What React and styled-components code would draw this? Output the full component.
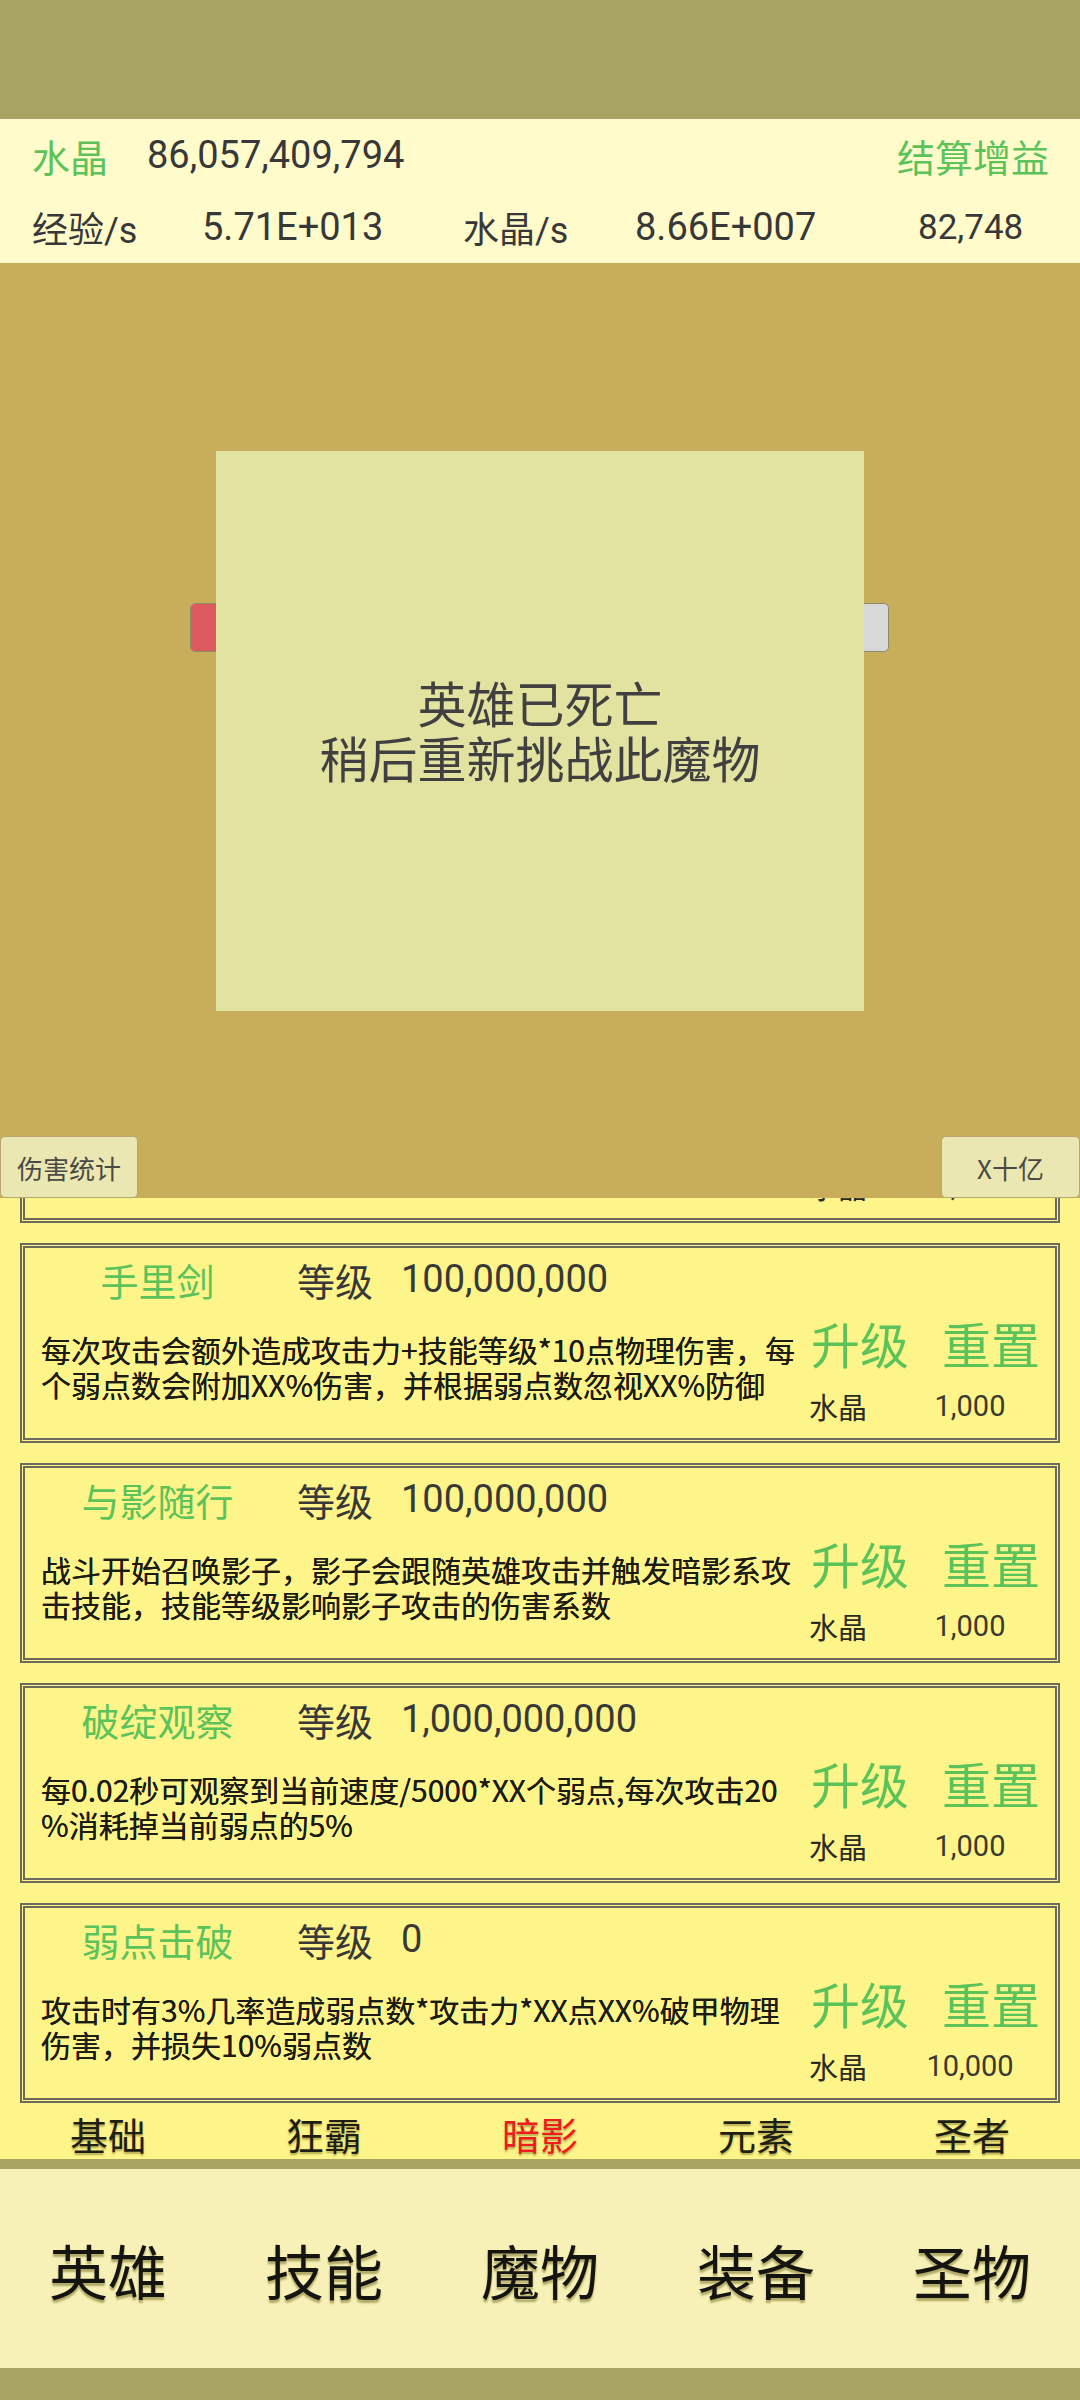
import React from 'react';
import styled, { createGlobalStyle } from 'styled-components';

const GlobalStyle = createGlobalStyle`
    html, body {
        margin: 0;
        padding: 0;
        background: #a8a463;
    }
    body {
        font-family: Roboto, "Noto Sans CJK SC", sans-serif;
    }
`;

const Screen = styled.div`
    width: 1080px;
    height: 2400px;
    display: flex;
    flex-direction: column;
    background: #a8a463;
    overflow: hidden;
`;

const TopBand = styled.div`
    height: 119px;
    flex: none;
    background: #a8a463;
`;

const Header = styled.div`
    height: 144px;
    flex: none;
    background: #fffbcb;
    display: flex;
    flex-direction: column;
`;

const HeaderRow = styled.div`
    height: 72px;
    display: grid;
    grid-template-columns: ${p => p.$cols};
    align-items: center;
    padding: 0 31px 0 32px;
    font-size: 38px;
    color: #383838;
`;

const Cell = styled.span`
    color: ${p => (p.$green ? '#5cc25a' : '#383838')};
    font-size: ${p => p.$size || 38}px;
    text-align: ${p => p.$align || 'left'};
    white-space: nowrap;
`;

const Battle = styled.div`
    position: relative;
    height: 935px;
    flex: none;
    background: #c8ad5a;
    display: flex;
    flex-direction: column;
`;

const HpBar = styled.div`
    margin: 340px 0 0 190px;
    width: 699px;
    height: 49px;
    box-sizing: border-box;
    border: 1px solid #8e8a70;
    border-radius: 5px;
    background: #d8d8d8;
    overflow: hidden;
`;

const HpFill = styled.div`
    height: 100%;
    background: #dc5a5e;
    border-right: 1px solid #a04040;
`;

const Spacer = styled.div`
    flex: 1;
`;

const BattleButtons = styled.div`
    display: flex;
    justify-content: space-between;
    align-items: flex-end;
`;

const SmallButton = styled.div`
    width: ${p => p.$w}px;
    height: 62px;
    box-sizing: border-box;
    border: 1px solid #b8a870;
    border-radius: 5px;
    background: #eae7b2;
    display: flex;
    align-items: center;
    justify-content: center;
    font-size: 26px;
    color: #4a4a44;
    font-family: "Noto Sans CJK SC", sans-serif;
`;

const DeathDialog = styled.div`
    position: absolute;
    left: 216px;
    top: 188px;
    width: 648px;
    height: 560px;
    padding-bottom: 4px;
    box-sizing: border-box;
    background: #e2e3a1;
    display: flex;
    flex-direction: column;
    align-items: center;
    justify-content: center;
    font-family: "Noto Sans CJK SC", sans-serif;
    font-size: 49px;
    color: #404040;
    text-align: center;
`;

const DialogLine = styled.div`
    height: 55px;
    line-height: 55px;
`;

const SkillList = styled.div`
    height: 910px;
    flex: none;
    background: #fef58a;
    overflow: hidden;
`;

const SkillInner = styled.div`
    display: flex;
    flex-direction: column;
    gap: 20px;
    margin-top: -175px;
`;

const Card = styled.div`
    margin: 0 20px;
    height: 200px;
    box-sizing: border-box;
    border: 5px double #6c6a5e;
    display: grid;
    grid-template-columns: 780px 1fr;
    font-family: "Noto Sans CJK SC", sans-serif;
`;

const CardLeft = styled.div`
    display: flex;
    flex-direction: column;
`;

const TitleRow = styled.div`
    height: 62px;
    display: flex;
    align-items: center;
    font-size: 38px;
    color: #383838;
`;

const SkillName = styled.span`
    width: 265px;
    text-align: center;
    color: #5cc25a;
`;

const LevelLabel = styled.span`
    margin-left: 7px;
    width: 104px;
`;

const LevelValue = styled.span`
    font-family: Roboto, "Noto Sans CJK SC", sans-serif;
`;

const Desc = styled.div`
    margin-top: 22px;
    padding-left: 16px;
    font-size: 30px;
    line-height: 35px;
    color: #1c1c14;
    white-space: nowrap;
    text-shadow: 0 0 0.6px #1c1c14;
`;

const CardRight = styled.div`
    display: flex;
    flex-direction: column;
    padding-top: 65px;
    white-space: nowrap;
`;

const ActionRow = styled.div`
    display: flex;
    gap: 33px;
    padding-left: 6px;
    font-size: 49px;
    line-height: 60px;
    color: #5cc25a;
`;

const CostRow = styled.div`
    display: flex;
    align-items: center;
    margin-top: 15px;
    padding-left: 4px;
    font-size: 29px;
    line-height: 36px;
    color: #2a2a20;
`;

const CostValue = styled.span`
    width: 160px;
    margin-left: 23px;
    text-align: center;
    font-family: Roboto, sans-serif;
    color: #3a3a30;
`;

const SubTabs = styled.div`
    height: 51px;
    flex: none;
    background: #fef58a;
    display: grid;
    grid-template-columns: repeat(5, 1fr);
    align-items: center;
    font-family: "Noto Sans CJK SC", sans-serif;
`;

const SubTab = styled.div`
    text-align: center;
    font-size: 38px;
    line-height: 46px;
    color: ${p => (p.$active ? '#ee1c1c' : '#1e1e14')};
    text-shadow: 0 2px 2px rgba(90, 80, 0, 0.45);
`;

const Strip = styled.div`
    height: 10px;
    flex: none;
    background: #aaa462;
`;

const BottomNav = styled.div`
    height: 199px;
    flex: none;
    background: #f7f1b7;
    display: grid;
    grid-template-columns: repeat(5, 1fr);
    align-items: center;
    font-family: "Noto Sans CJK SC", sans-serif;
`;

const NavItem = styled.div`
    text-align: center;
    font-size: 59px;
    color: #141410;
    padding-top: 2px;
    text-shadow: 0 3px 2px rgba(90, 80, 0, 0.45);
`;

const skills = [
    {
        name: '影袭',
        level: '100,000,000',
        lines: ['每次攻击有几率发动影袭，造成攻击力*技能等级点暗影', '伤害，并提升下一次攻击的暴击率'],
        cost: '1,000',
    },
    {
        name: '手里剑',
        level: '100,000,000',
        lines: ['每次攻击会额外造成攻击力+技能等级*10点物理伤害，每', '个弱点数会附加XX%伤害，并根据弱点数忽视XX%防御'],
        cost: '1,000',
    },
    {
        name: '与影随行',
        level: '100,000,000',
        lines: ['战斗开始召唤影子，影子会跟随英雄攻击并触发暗影系攻', '击技能，技能等级影响影子攻击的伤害系数'],
        cost: '1,000',
    },
    {
        name: '破绽观察',
        level: '1,000,000,000',
        lines: ['每0.02秒可观察到当前速度/5000*XX个弱点,每次攻击20', '%消耗掉当前弱点的5%'],
        cost: '1,000',
    },
    {
        name: '弱点击破',
        level: '0',
        lines: ['攻击时有3%几率造成弱点数*攻击力*XX点XX%破甲物理', '伤害，并损失10%弱点数'],
        cost: '10,000',
    },
];

const subTabs = ['基础', '狂霸', '暗影', '元素', '圣者'];
const navItems = ['英雄', '技能', '魔物', '装备', '圣物'];

const SkillCard = ({ skill }) => (
    <Card>
        <CardLeft>
            <TitleRow>
                <SkillName>{skill.name}</SkillName>
                <LevelLabel>等级</LevelLabel>
                <LevelValue>{skill.level}</LevelValue>
            </TitleRow>
            <Desc>
                {skill.lines.map((l, i) => (
                    <div key={i}>{l}</div>
                ))}
            </Desc>
        </CardLeft>
        <CardRight>
            <ActionRow>
                <span>升级</span>
                <span>重置</span>
            </ActionRow>
            <CostRow>
                <span>水晶</span>
                <CostValue>{skill.cost}</CostValue>
            </CostRow>
        </CardRight>
    </Card>
);

const App = () => {
    const hp = 0.5;

    return (
        <Screen>
            <GlobalStyle />
            <TopBand />
            <Header>
                <HeaderRow $cols="115px 1fr auto">
                    <Cell $green>水晶</Cell>
                    <Cell>86,057,409,794</Cell>
                    <Cell $green>结算增益</Cell>
                </HeaderRow>
                <HeaderRow $cols="170px 261px 172px 283px 1fr">
                    <Cell $size={36}>经验/s</Cell>
                    <Cell>5.71E+013</Cell>
                    <Cell $size={36}>水晶/s</Cell>
                    <Cell>8.66E+007</Cell>
                    <Cell $size={35}>82,748</Cell>
                </HeaderRow>
            </Header>

            <Battle>
                <HpBar>
                    <HpFill style={{ width: `${hp * 100}%` }} />
                </HpBar>
                <Spacer />
                <BattleButtons>
                    <SmallButton $w={138}>伤害统计</SmallButton>
                    <SmallButton $w={139}>X十亿</SmallButton>
                </BattleButtons>
                <DeathDialog>
                    <DialogLine>英雄已死亡</DialogLine>
                    <DialogLine>稍后重新挑战此魔物</DialogLine>
                </DeathDialog>
            </Battle>

            <SkillList>
                <SkillInner>
                    {skills.map((s, i) => (
                        <SkillCard key={i} skill={s} />
                    ))}
                </SkillInner>
            </SkillList>

            <SubTabs>
                {subTabs.map(t => (
                    <SubTab key={t} $active={t === '暗影'}>{t}</SubTab>
                ))}
            </SubTabs>
            <Strip />
            <BottomNav>
                {navItems.map(n => (
                    <NavItem key={n}>{n}</NavItem>
                ))}
            </BottomNav>
        </Screen>
    );
};

export default App;
